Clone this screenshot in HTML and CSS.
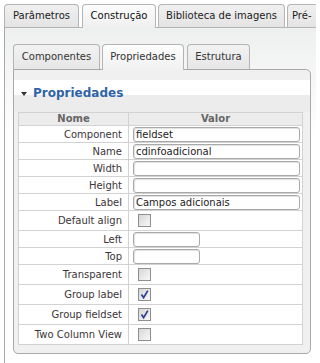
FILE: index.html
```html
<!DOCTYPE html>
<html lang="pt">
<head>
<meta charset="utf-8">
<title>Propriedades</title>
<link rel="stylesheet" href="styles.css">
</head>
<body>
<div class="widget">
  <ul class="otabs">
    <li class="otab t1">Parâmetros</li>
    <li class="otab t2 active">Construção</li>
    <li class="otab t3">Biblioteca de imagens</li>
    <li class="otab t4">Pré-</li>
  </ul>
  <div class="opanel">
    <ul class="itabs">
      <li class="itab i1">Componentes</li>
      <li class="itab i2 active">Propriedades</li>
      <li class="itab i3">Estrutura</li>
    </ul>
    <div class="ipanel">
      <div class="header"><span class="tri"></span><span class="title">Propriedades</span></div>
      <table class="props">
        <colgroup><col class="c1"><col class="c2"></colgroup>
        <thead>
          <tr class="hrow"><th>Nome</th><th>Valor</th></tr>
        </thead>
        <tbody>
          <tr class="trow"><td class="lbl">Component</td><td class="val"><span class="inp">fieldset</span></td></tr>
          <tr class="trow"><td class="lbl">Name</td><td class="val"><span class="inp">cdinfoadicional</span></td></tr>
          <tr class="trow"><td class="lbl">Width</td><td class="val"><span class="inp"></span></td></tr>
          <tr class="trow"><td class="lbl">Height</td><td class="val"><span class="inp"></span></td></tr>
          <tr class="trow"><td class="lbl">Label</td><td class="val"><span class="inp">Campos adicionais</span></td></tr>
          <tr class="crow"><td class="lbl">Default align</td><td class="val"><span class="cb"></span></td></tr>
          <tr class="trow"><td class="lbl">Left</td><td class="val"><span class="inp short"></span></td></tr>
          <tr class="trow"><td class="lbl">Top</td><td class="val"><span class="inp short"></span></td></tr>
          <tr class="crow"><td class="lbl">Transparent</td><td class="val"><span class="cb"></span></td></tr>
          <tr class="crow"><td class="lbl">Group label</td><td class="val"><span class="cb"><svg viewBox="0 0 11 11" width="11" height="11"><path d="M2.5 5.5 L4.6 8.6 L8.8 1.6" fill="none" stroke="#2d3f92" stroke-width="1.7"/></svg></span></td></tr>
          <tr class="crow"><td class="lbl">Group fieldset</td><td class="val"><span class="cb"><svg viewBox="0 0 11 11" width="11" height="11"><path d="M2.5 5.5 L4.6 8.6 L8.8 1.6" fill="none" stroke="#2d3f92" stroke-width="1.7"/></svg></span></td></tr>
          <tr class="crow"><td class="lbl">Two Column View</td><td class="val"><span class="cb"></span></td></tr>
        </tbody>
      </table>
    </div>
  </div>
</div>
</body>
</html>
```

FILE: styles.css
```css
html, body {
  margin: 0;
  padding: 0;
  background: #fff;
  overflow: hidden;
}
body {
  width: 316px;
  height: 363px;
  font-family: "DejaVu Sans", Verdana, sans-serif;
  font-size: 10px;
  color: #222;
}
.widget {
  margin: 4px 0 0 4px;
  width: 312px;
}
ul {
  list-style: none;
  margin: 0;
  padding: 0;
}
.otabs {
  display: flex;
  height: 23px;
  position: relative;
  z-index: 2;
}
.otab {
  box-sizing: border-box;
  height: 23px;
  border: 1px solid #b4b4b4;
  border-bottom: 0;
  border-radius: 4px 4px 0 0;
  background: linear-gradient(#f0f0f0, #e4e4e4);
  color: #222;
  line-height: 22px;
  text-align: center;
  white-space: nowrap;
  overflow: hidden;
  flex: none;
}
.otab.active {
  height: 24px;
  background: linear-gradient(#fcfcfc, #efefef);
  color: #111;
}
.t1 { width: 75px; }
.t2 { width: 74px; margin-left: 3px; }
.t3 { width: 127px; margin-left: 2px; }
.t4 {
  width: 29px;
  margin-left: 2px;
  text-align: left;
  padding-left: 4px;
  border-right: 0;
  border-top-right-radius: 0;
}
.opanel {
  box-sizing: border-box;
  height: 336px;
  border-top: 1px solid #b4b4b4;
  border-left: 1px solid #a8a8a8;
  background: linear-gradient(#eeefef, #ffffff 110px);
  padding: 16px 0 0 8px;
}
.itabs {
  display: flex;
  height: 25px;
  position: relative;
  z-index: 2;
}
.itab {
  box-sizing: border-box;
  height: 25px;
  border: 1px solid #b4b4b4;
  border-bottom: 0;
  border-radius: 4px 4px 0 0;
  background: linear-gradient(#f2f2f2, #e6e6e6);
  color: #333;
  line-height: 24px;
  text-align: center;
  white-space: nowrap;
  flex: none;
}
.itab.active {
  height: 26px;
  background: linear-gradient(#fdfdfd, #f1f1f1);
}
.i1 { width: 87px; }
.i2 { width: 82px; margin-left: 2px; }
.i3 { width: 63px; margin-left: 3px; }
.ipanel {
  box-sizing: border-box;
  width: 298px;
  height: 285px;
  border: 1px solid #a9a9a9;
  border-radius: 0 5px 5px 5px;
  background: #f0f0f0;
  padding-top: 10px;
}
.header {
  height: 32px;
  background: linear-gradient(#ffffff 0, #ffffff 15px, #ececec 15px, #ececec);
  display: flex;
  align-items: center;
  padding-left: 7px;
  box-sizing: border-box;
  padding-bottom: 6px;
}
.tri {
  width: 0;
  height: 0;
  border-left: 3px solid transparent;
  border-right: 3px solid transparent;
  border-top: 4px solid #333;
  margin-right: 6px;
  margin-top: 1px;
}
.title {
  font-weight: bold;
  font-size: 12px;
  color: #2f63a8;
}
.props {
  border-collapse: collapse;
  margin-left: 4px;
  width: 285px;
  background: #fff;
  table-layout: fixed;
}
.c1 { width: 110px; }
.props th, .props td {
  border: 1px solid #d2d2d2;
  padding: 0;
}
.hrow th {
  height: 12px;
  line-height: 12px;
  background: #ececec;
  color: #666;
  font-weight: bold;
  font-size: 10px;
  text-align: center;
}
.trow td { height: 16px; }
.crow td { height: 19px; }
.lbl {
  text-align: right;
  padding-right: 6px !important;
  color: #3b3538;
  white-space: nowrap;
}
.val {
  padding-left: 4px !important;
}
.inp {
  display: block;
  box-sizing: border-box;
  width: 167px;
  height: 15px;
  border: 1px solid #a9a9a9;
  border-radius: 3px;
  background: #fff;
  box-shadow: inset 1px 1px 1px #e0e0e0;
  padding-left: 2px;
  line-height: 13px;
  color: #222;
  font-size: 10px;
  white-space: nowrap;
  overflow: hidden;
}
.inp.short { width: 67px; }
.cb {
  display: flex;
  align-items: center;
  justify-content: center;
  box-sizing: border-box;
  width: 13px;
  height: 13px;
  margin-left: 5px;
  border: 1px solid #8e8e8e;
  background: linear-gradient(135deg, #d6d6d6, #f8f8f8);
}
.cb svg { display: block; }
```
